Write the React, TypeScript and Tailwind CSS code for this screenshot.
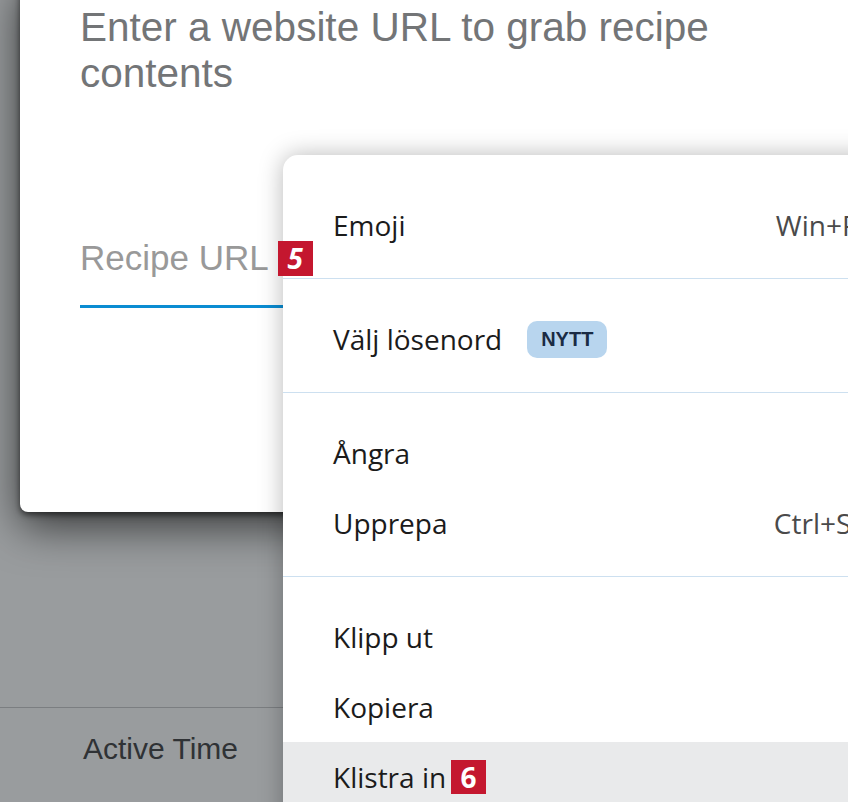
export default function App() {
  const sans = "font-['Open_Sans','Noto_Sans',sans-serif]";
  return (
    <div className="relative w-[848px] h-[802px] overflow-hidden bg-[#999c9e] font-['Liberation_Sans',Arial,sans-serif]">
      {/* page underneath the modal */}
      <div className="h-[707px]" />
      <div className="border-t border-[#7b7e81] pl-[83px] pt-[23px] text-[30px] leading-[35px] text-[#2f3235]">
        Active Time
      </div>

      {/* modal */}
      <div className="absolute left-[20px] top-[-24px] w-[900px] h-[536px] rounded-[8px] bg-white pl-[60px] pt-[28px] shadow-[0_3px_6px_rgba(0,0,0,0.55),0_14px_44px_rgba(0,0,0,0.65)]">
        <h2 className="max-w-[680px] text-[40.5px] leading-[46px] text-[#737577]">
          Enter a website URL to grab recipe contents
        </h2>
        <div className="mt-[142px] w-[300px]">
          <div className="flex items-center gap-[9px]">
            <span className="text-[35px] leading-[40px] text-[#999999]">Recipe URL</span>
            <span className={`relative z-10 flex h-[35px] w-[35px] items-center justify-center bg-[#c4172f] text-[28px] font-bold italic text-white ${sans}`}>
              5
            </span>
          </div>
          <div className="mt-[27px] h-[3px] bg-[#0a8cd2]" />
        </div>
      </div>

      {/* context menu */}
      <div className={`absolute left-[283px] top-[155px] w-[684px] rounded-[15px] bg-white py-[10px] text-[28px] text-[#1b1b1b] shadow-[0_0_24px_rgba(0,0,0,0.28)] ${sans}`}>
        <div className="pt-[25px] pb-[18px]">
          <Item label="Emoji" shortcut="Win+Period" />
        </div>
        <div className="h-px bg-[#cde0f0]" />
        <div className="pt-[25px] pb-[18px]">
          <div className="flex h-[70px] items-center pl-[50px]">
            <span>Välj lösenord</span>
            <span className="ml-[25px] flex h-[37px] w-[80px] items-center justify-center rounded-[10px] bg-[#b8d5ee] text-[20px] font-bold text-[#1a2b44] font-['Liberation_Sans',Arial,sans-serif]">
              NYTT
            </span>
          </div>
        </div>
        <div className="h-px bg-[#cde0f0]" />
        <div className="pt-[25px] pb-[18px]">
          <Item label="Ångra" shortcut="Ctrl+Z" />
          <Item label="Upprepa" shortcut="Ctrl+Shift+Z" />
        </div>
        <div className="h-px bg-[#cde0f0]" />
        <div className="pt-[25px] pb-[18px]">
          <Item label="Klipp ut" shortcut="Ctrl+X" />
          <Item label="Kopiera" shortcut="Ctrl+C" />
          <div className="flex h-[70px] items-center bg-[#e9eaeb] pl-[50px] pr-[40px]">
            <span>Klistra in</span>
            <span className="ml-[5px] flex h-[34px] w-[35px] items-center justify-center bg-[#c4172f] text-[28px] font-bold text-white">
              6
            </span>
            <span className="ml-auto text-[#4a4a4a]">Ctrl+V</span>
          </div>
        </div>
      </div>
    </div>
  );
}

function Item({ label, shortcut }: { label: string; shortcut?: string }) {
  return (
    <div className="flex h-[70px] items-center justify-between pl-[50px] pr-[40px]">
      <span>{label}</span>
      {shortcut && <span className="text-[#4a4a4a]">{shortcut}</span>}
    </div>
  );
}
